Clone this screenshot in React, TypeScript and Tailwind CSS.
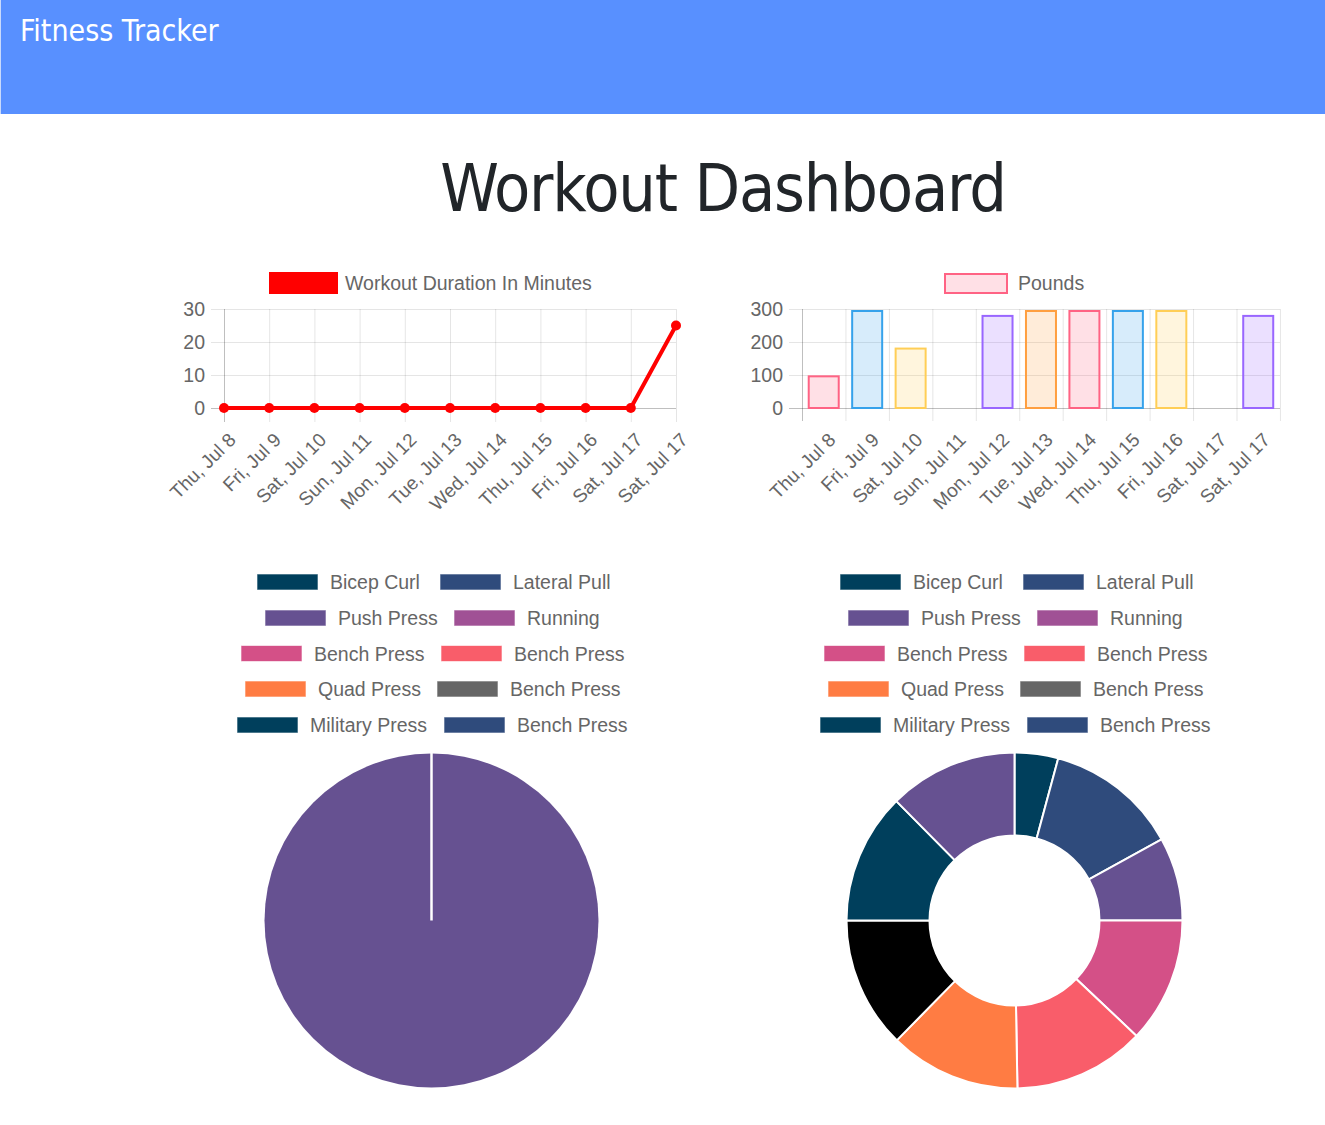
const labels = [
  "Thu, Jul 8",
  "Fri, Jul 9",
  "Sat, Jul 10",
  "Sun, Jul 11",
  "Mon, Jul 12",
  "Tue, Jul 13",
  "Wed, Jul 14",
  "Thu, Jul 15",
  "Fri, Jul 16",
  "Sat, Jul 17",
  "Sat, Jul 17",
];

const chartFont = "'Liberation Sans', Arial, Helvetica, sans-serif";
const grid = "rgba(0,0,0,0.1)";
const zero = "rgba(0,0,0,0.25)";

const yRows = [309, 342, 375, 408];

function XLabels({ xs }: { xs: number[] }) {
  return (
    <>
      {labels.map((l, i) => {
        const ax = xs[i] + 13;
        const ay = 441;
        return (
          <text
            key={i}
            x={ax}
            y={ay}
            textAnchor="end"
            transform={`rotate(-45 ${ax} ${ay})`}
            fontSize={19}
            fill="#666"
            fontFamily={chartFont}
          >
            {l}
          </text>
        );
      })}
    </>
  );
}

function LineChart() {
  const xs = labels.map((_, i) => 224 + i * 45.2);
  const values = [0, 0, 0, 0, 0, 0, 0, 0, 0, 0, 25];
  const ys = values.map((v) => 408 - v * 3.3);
  return (
    <svg width={583} height={270} viewBox="140 255 583 270">
      <rect x={269} y={272} width={69} height={22} fill="#ff0000" />
      <text x={345} y={290} fontSize={19.5} fill="#666" fontFamily={chartFont}>
        Workout Duration In Minutes
      </text>
      {["30", "20", "10", "0"].map((t, i) => (
        <text key={t} x={205} y={yRows[i] + 7} textAnchor="end" fontSize={19.5} fill="#666" fontFamily={chartFont}>
          {t}
        </text>
      ))}
      {yRows.map((y, i) => (
        <line key={y} x1={211} x2={676} y1={y + 0.5} y2={y + 0.5} stroke={i === 3 ? zero : grid} />
      ))}
      {xs.map((x, i) => (
        <line key={i} x1={x + 0.5} x2={x + 0.5} y1={309} y2={422} stroke={i === 0 ? zero : grid} />
      ))}
      <polyline
        points={xs.map((x, i) => `${x},${ys[i]}`).join(" ")}
        fill="none"
        stroke="#ff0000"
        strokeWidth={4}
        strokeLinejoin="round"
      />
      {xs.map((x, i) => (
        <circle key={i} cx={x} cy={ys[i]} r={5} fill="#ff0000" />
      ))}
      <XLabels xs={xs} />
    </svg>
  );
}

const barColors = [
  [255, 99, 132],
  [54, 162, 235],
  [255, 206, 86],
  [75, 192, 192],
  [153, 102, 255],
  [255, 159, 64],
];

function BarChart() {
  const step = 43.45;
  const left = 802;
  const values = [100, 300, 185, 0, 285, 300, 300, 300, 300, 0, 285];
  const centers = labels.map((_, i) => left + (i + 0.5) * step);
  return (
    <svg width={583} height={270} viewBox="723 255 583 270">
      <rect x={945} y={274} width={62} height={19} fill="rgba(255,99,132,0.2)" stroke="rgb(255,99,132)" strokeWidth={2} />
      <text x={1018} y={290} fontSize={19.5} fill="#666" fontFamily={chartFont}>
        Pounds
      </text>
      {["300", "200", "100", "0"].map((t, i) => (
        <text key={t} x={783} y={yRows[i] + 7} textAnchor="end" fontSize={19.5} fill="#666" fontFamily={chartFont}>
          {t}
        </text>
      ))}
      {yRows.map((y, i) => (
        <line key={y} x1={789} x2={1280} y1={y + 0.5} y2={y + 0.5} stroke={i === 3 ? zero : grid} />
      ))}
      {Array.from({ length: 12 }).map((_, i) => (
        <line
          key={i}
          x1={left + i * step + 0.5}
          x2={left + i * step + 0.5}
          y1={309}
          y2={421}
          stroke={i === 0 ? zero : grid}
        />
      ))}
      {values.map((v, i) => {
        if (v === 0) return null;
        const [r, g, b] = barColors[i % 6];
        const top = 408 - (v * 98) / 300;
        return (
          <rect
            key={i}
            x={centers[i] - 15}
            y={top + 1}
            width={30}
            height={408 - top - 1}
            fill={`rgba(${r},${g},${b},0.2)`}
            stroke={`rgb(${r},${g},${b})`}
            strokeWidth={2}
          />
        );
      })}
      <XLabels xs={centers} />
    </svg>
  );
}

type Item = { box: number; label: string; color: string };

const legendRows: Item[][] = [
  [
    { box: 257, label: "Bicep Curl", color: "#003f5c" },
    { box: 440, label: "Lateral Pull", color: "#2f4b7c" },
  ],
  [
    { box: 265, label: "Push Press", color: "#665191" },
    { box: 454, label: "Running", color: "#a05195" },
  ],
  [
    { box: 241, label: "Bench Press", color: "#d45087" },
    { box: 441, label: "Bench Press", color: "#f95d6a" },
  ],
  [
    { box: 245, label: "Quad Press", color: "#ff7c43" },
    { box: 437, label: "Bench Press", color: "#666666" },
  ],
  [
    { box: 237, label: "Military Press", color: "#003f5c" },
    { box: 444, label: "Bench Press", color: "#2f4b7c" },
  ],
];

const legendY = [582, 618, 653.5, 689, 725];

function PieLegend({ shift }: { shift: number }) {
  return (
    <>
      {legendRows.map((row, r) =>
        row.map((it, k) => (
          <g key={`${r}-${k}`}>
            <rect
              x={it.box + shift}
              y={legendY[r] - 8}
              width={61}
              height={16}
              fill={it.color}
              stroke="rgba(255,255,255,0.6)"
              strokeWidth={1}
            />
            <text
              x={it.box + shift + 73}
              y={legendY[r] + 7}
              fontSize={19.5}
              fill="#666"
              fontFamily={chartFont}
            >
              {it.label}
            </text>
          </g>
        ))
      )}
    </>
  );
}

function PieChart() {
  const cx = 431.5;
  const cy = 920.5;
  return (
    <svg width={583} height={585} viewBox="140 525 583 585">
      <PieLegend shift={0} />
      <circle cx={cx} cy={cy} r={167} fill="#665191" />
      <line x1={cx} x2={cx} y1={cy - 168} y2={cy} stroke="#fff" strokeWidth={2.5} />
    </svg>
  );
}

function pt(cx: number, cy: number, r: number, deg: number) {
  const a = ((deg - 90) * Math.PI) / 180;
  return [cx + r * Math.cos(a), cy + r * Math.sin(a)];
}

function arc(cx: number, cy: number, ro: number, ri: number, a0: number, a1: number) {
  const large = a1 - a0 > 180 ? 1 : 0;
  const [x0, y0] = pt(cx, cy, ro, a0);
  const [x1, y1] = pt(cx, cy, ro, a1);
  const [x2, y2] = pt(cx, cy, ri, a1);
  const [x3, y3] = pt(cx, cy, ri, a0);
  return `M${x0} ${y0} A${ro} ${ro} 0 ${large} 1 ${x1} ${y1} L${x2} ${y2} A${ri} ${ri} 0 ${large} 0 ${x3} ${y3} Z`;
}

const segments: [number, number, string][] = [
  [0, 15.1, "#003f5c"],
  [15.1, 61.1, "#2f4b7c"],
  [61.1, 90, "#665191"],
  [90, 133.4, "#d45087"],
  [133.4, 179, "#f95d6a"],
  [179, 224.5, "#ff7c43"],
  [224.5, 270, "#000000"],
  [270, 315.3, "#003f5c"],
  [315.3, 360, "#665191"],
];

function DoughnutChart() {
  const cx = 1014.5;
  const cy = 920.5;
  return (
    <svg width={583} height={585} viewBox="723 525 583 585">
      <PieLegend shift={583} />
      {segments.map(([a0, a1, c], i) => (
        <path key={i} d={arc(cx, cy, 168, 85, a0, a1)} fill={c} stroke="#fff" strokeWidth={2} />
      ))}
    </svg>
  );
}

export default function App() {
  return (
    <div className="min-h-[1125px] bg-white">
      <header className="h-[114px] border-l border-[#c9dafc] bg-[#5890ff] pl-[19px] pt-[16px]">
        <span
          className="block text-[30px] leading-none text-white"
          style={{ fontFamily: "'DejaVu Sans Condensed', 'DejaVu Sans', Verdana, sans-serif" }}
        >
          Fitness Tracker
        </span>
      </header>
      <main className="ml-[140px] w-[1166px]">
        <div className="flex h-[141px] justify-center pt-[42px]">
          <h1
            className="h-[66px] text-[66px] leading-none tracking-[-1.2px] text-[#212529]"
            style={{ fontFamily: "'DejaVu Sans Condensed', 'DejaVu Sans', Verdana, sans-serif" }}
          >
            Workout Dashboard
          </h1>
        </div>
        <div className="grid grid-cols-2">
          <LineChart />
          <BarChart />
          <PieChart />
          <DoughnutChart />
        </div>
      </main>
    </div>
  );
}
